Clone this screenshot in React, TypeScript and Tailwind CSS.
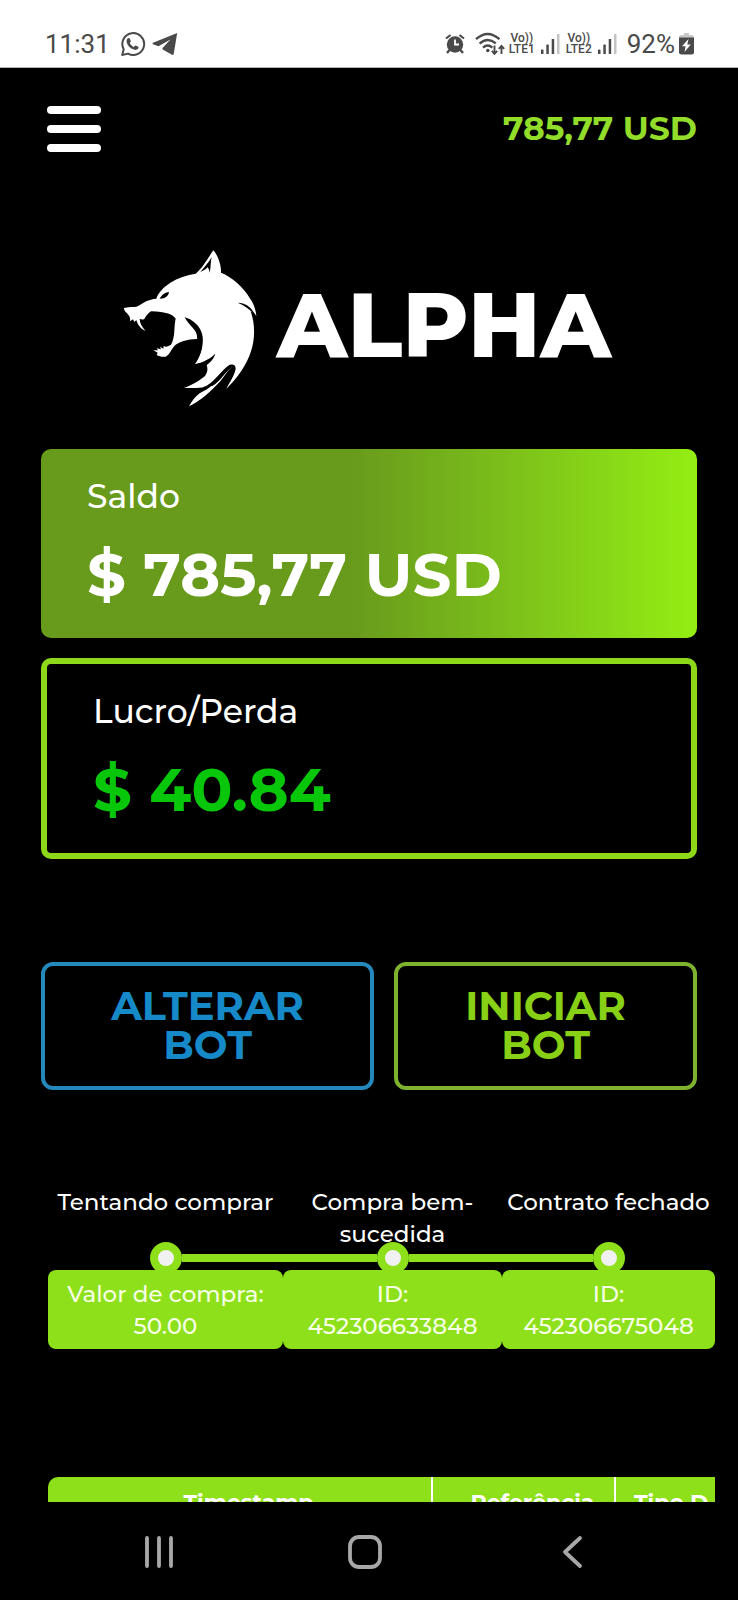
import type { ReactNode } from 'react'

const steps = [
  { title: 'Tentando comprar', label: 'Valor de compra:', value: '50.00' },
  { title: 'Compra bem-sucedida', label: 'ID:', value: '452306633848' },
  { title: 'Contrato fechado', label: 'ID:', value: '452306675048' },
]

function WhatsappIcon() {
  return (
    <svg viewBox="0 0 26 26" className="size-[26px]" fill="none">
      <path d="M2.2 24l1.5-5.7A10.9 10.9 0 1 1 8 22.6z" stroke="#4a4a4a" strokeWidth="2" strokeLinejoin="round" />
      <path
        d="M7.3 7.8c1-1.2 2-1 2.5 0l1 2.3c.2.6-.8 1.4-1 1.9.8 1.7 2.2 3 4 3.9.6-.2 1.2-1.5 1.9-1.3l2.5 1.2c.7.5.3 1.7-.4 2.3-1.5 1.2-3.5.9-5.3 0-2.2-1.1-4-2.8-5.1-4.9-.8-1.6-1.3-3.9-.1-5.4z"
        fill="#4a4a4a"
      />
    </svg>
  )
}

function TelegramIcon() {
  return (
    <svg viewBox="0 0 26 24" className="h-6 w-[26px]">
      <path d="M25.2 1L1 10.7c-.7.4-.6 1.3 0 1.6l5.5 1.9L18.5 7.5 10.5 16l.1 1.5 9.5 5.3c.7.3 1.4 0 1.6-.8z" fill="#4a4a4a" />
    </svg>
  )
}

function AlarmIcon() {
  return (
    <svg viewBox="0 0 20 20" className="size-5" fill="none" stroke="#4a4a4a">
      <circle cx="10" cy="10.5" r="8.2" fill="#4a4a4a" stroke="none" />
      <path d="M1 4.5L5.5 1M19 4.5L14.5 1" strokeWidth="2.2" />
      <path d="M4.5 16L2 19M15.5 16l2.5 3" strokeWidth="2.4" />
      <path d="M10 5.5v5h4" stroke="#fff" strokeWidth="1.8" />
    </svg>
  )
}

function WifiIcon() {
  return (
    <svg viewBox="0 0 30 24" className="h-6 w-[30px]" fill="none" stroke="#4a4a4a">
      <path d="M1 7.2Q12.5-3.4 24.5 7.2M4.6 11.6q8-7 16.2-.2M8 15.6q4.6-4 9.4 0" strokeWidth="2.4" />
      <circle cx="12.8" cy="18.5" r="1.8" fill="#4a4a4a" stroke="none" />
      <path d="M19.5 13.5v8.2M16.8 18.8l2.7 3 2.7-3M26.5 22v-8.2M23.8 16.8l2.7-3 2.7 3" strokeWidth="1.9" />
    </svg>
  )
}

function SignalBars() {
  return (
    <svg viewBox="0 0 19 20" className="h-5 w-[19px]" fill="#4a4a4a">
      <rect x="0" y="15.5" width="2.5" height="4.5" rx=".5" />
      <rect x="5.3" y="10.5" width="2.5" height="9.5" rx=".5" />
      <rect x="10.7" y="5" width="2.5" height="15" rx=".5" />
      <rect x="16" y="0" width="2.5" height="20" rx=".5" fill="#c4c4c4" />
    </svg>
  )
}

function BatteryIcon() {
  return (
    <svg viewBox="0 0 15 22" className="h-[22px] w-[15px]">
      <path d="M5 0h5v2h2.5q2.5 0 2.5 2.5V6H0V4.5Q0 2 2.5 2H5z" fill="#c8c8c8" />
      <path d="M0 4.5h15V19q0 2.5-2.5 2.5h-10Q0 21.5 0 19z" fill="#4a4a4a" />
      <path d="M9.5 6L3 13.3h3.6L5.5 19l6.3-7.5H8.3z" fill="#fff" />
    </svg>
  )
}

function Volte({ line }: { line: string }) {
  return (
    <div className="flex flex-col items-center text-xs font-medium leading-[11px]">
      <span>Vo))</span>
      <span>{line}</span>
    </div>
  )
}

function StatusBar() {
  return (
    <div className="flex h-[68px] shrink-0 items-center justify-between border-b border-[#b5b5b5] bg-white pl-[45px] pr-11 pt-5 font-[Roboto,sans-serif] text-[#4a4a4a]">
      <div className="flex items-center gap-2.5">
        <span className="text-[26px] leading-7">11:31</span>
        <div className="flex items-center gap-1.5">
          <WhatsappIcon />
          <TelegramIcon />
        </div>
      </div>
      <div className="flex items-center">
        <AlarmIcon />
        <div className="ml-2.5 flex items-center gap-1">
          <WifiIcon />
          <Volte line="LTE1" />
        </div>
        <div className="ml-1.5 flex items-center gap-1.5">
          <SignalBars />
          <Volte line="LTE2" />
          <SignalBars />
        </div>
        <span className="ml-2.5 text-[26px] leading-7">92%</span>
        <div className="ml-1">
          <BatteryIcon />
        </div>
      </div>
    </div>
  )
}

function WolfLogo() {
  return (
    <svg viewBox="0 0 480 540" className="h-[180px] w-[160px] shrink-0" role="img" aria-label="Alpha">
      <path
        d="M38 205C50 200 68 203 80 199C98 187 112 178 136 176C140 160 156 143 178 128C200 114 228 105 254 101C275 84 290 55 307 31C319 44 331 72 330 98C362 110 398 142 416 174C428 190 434 208 436 228C430 219 424 216 419 214C433 252 432 300 420 334C408 374 378 416 346 446C352 424 366 404 368 378C350 388 340 412 322 430C300 454 266 484 234 499C243 484 252 470 266 460C284 450 296 444 306 432C280 446 248 444 219 444C246 434 268 420 282 408C292 394 290 382 286 372C276 368 264 370 251 373C266 352 276 326 272 300C266 296 262 296 257 297C230 297 202 306 190 318C180 330 176 344 164 350C154 351 144 350 137 345L140 338L127 331L141 331L137 325L150 328L147 320L157 326L158 318C166 323 172 318 180 314C194 290 188 258 194 236C186 224 166 215 120 214C110 220 104 230 100 237C94 240 90 238 86 236C86 250 94 262 104 273C88 266 80 254 76 240L70 246L66 238L57 244C60 230 50 222 42 214Z"
        fill="#fff"
      />
      <g fill="#000">
        <path d="M146 176C154 162 164 157 174 156C172 168 164 176 146 176Z" />
        <path d="M268 96C282 80 294 66 302 51C298 66 300 80 296 99C295 90 293 86 290 82C284 88 276 93 268 96Z" />
        <path d="M380 188C402 188 420 200 434 226C418 210 400 196 380 188Z" />
        <path d="M221 232C244 238 270 258 275 290C278 320 268 348 251 373L240 374C254 350 266 322 258 292C260 270 234 258 221 232Z" />
        <path d="M251 373C280 366 300 354 313 341C308 358 298 366 286 376L251 377Z" />
        <path d="M276 442C310 430 328 392 356 374Q374 370 374 386C370 408 356 426 346 446C344 424 358 404 364 382C342 394 330 424 304 438Z" />
      </g>
    </svg>
  )
}

function BalanceText({ label, amount, amountClass }: { label: string; amount: string; amountClass: string }) {
  return (
    <>
      <h2 className="text-[33px] font-medium leading-10 text-white">{label}</h2>
      <p className={`mt-4 text-[61px] font-bold leading-[84px] ${amountClass}`}>{amount}</p>
    </>
  )
}

function Balances() {
  return (
    <section className="mt-[29px] flex flex-col gap-5">
      <div className="rounded-[10px] bg-linear-to-r from-[#689a1c] from-47% to-[#94ee12] px-[46px] pb-[22px] pt-[27px]">
        <BalanceText label="Saldo" amount="$ 785,77 USD" amountClass="text-white" />
      </div>
      <div className="rounded-[10px] border-[6px] border-[#8ed81a] px-[46px] pb-[22px] pt-[27px]">
        <BalanceText label="Lucro/Perda" amount="$ 40.84" amountClass="text-[#08c60a]" />
      </div>
    </section>
  )
}

function Steps() {
  return (
    <section className="-mr-[18px] ml-[7px] mt-24 grid grid-cols-[235fr_219fr_213fr] text-center text-[23px] font-medium leading-8">
      {steps.map((step, i) => (
        <div key={step.title} className="flex flex-col">
          <h3 className="h-16 px-1">{step.title}</h3>
          <div className="mt-1 flex h-2 items-center">
            <span className={`h-2 flex-1 ${i > 0 ? 'bg-[#8ee01a]' : ''}`} />
            <span className="size-8 shrink-0 rounded-full border-8 border-[#8ee01a] bg-[#f1f1f1]" />
            <span className={`h-2 flex-1 ${i < steps.length - 1 ? 'bg-[#8ee01a]' : ''}`} />
          </div>
          <div className="mt-2 rounded-lg bg-[#8ee01a] pb-[7px] pt-2 text-[#f6ffe6]">
            <p>{step.label}</p>
            <p>{step.value}</p>
          </div>
        </div>
      ))}
    </section>
  )
}

function Transactions() {
  return (
    <section className="-mr-[18px] ml-[7px] mt-32 overflow-hidden rounded-tl-[10px]">
      <table className="w-full table-fixed border-collapse bg-[#8ee01a] text-[22px] font-bold leading-8">
        <thead>
          <tr>
            <th className="w-[384px] py-2.5 pl-[18px]">Timestamp</th>
            <th className="w-[183px] border-l-2 border-white py-2.5 pl-[18px]">Referência</th>
            <th className="whitespace-nowrap border-l-2 border-white py-2.5 pl-[18px] text-left">Tipo D</th>
          </tr>
        </thead>
      </table>
    </section>
  )
}

function NavButton({ label, children }: { label: string; children: ReactNode }) {
  return (
    <button type="button" aria-label={label} className="flex h-full items-center justify-center">
      <svg viewBox="0 0 34 34" className="size-[34px]" fill="none" stroke="#a8a8a8" strokeWidth="3.8" strokeLinecap="round" strokeLinejoin="round">
        {children}
      </svg>
    </button>
  )
}

function NavBar() {
  return (
    <nav className="grid h-[98px] shrink-0 grid-cols-3 bg-black pl-14 pr-16 pt-0.5">
      <NavButton label="Recentes">
        <path d="M5 3v28M17 3v28M29 3v28" />
      </NavButton>
      <NavButton label="Início">
        <rect x="2" y="2" width="30" height="30" rx="9" />
      </NavButton>
      <NavButton label="Voltar">
        <path d="M26 3L11 17l15 14" />
      </NavButton>
    </nav>
  )
}

export default function App() {
  return (
    <div className="flex h-screen flex-col bg-black font-[Montserrat,Inter,sans-serif] text-white">
      <StatusBar />
      <main className="flex-1 overflow-hidden px-[41px]">
        <header className="flex items-start justify-between pt-[38px]">
          <button type="button" aria-label="Menu" className="ml-1.5 flex w-[54px] flex-col gap-[11px]">
            <span className="h-2 rounded bg-white" />
            <span className="h-2 rounded bg-white" />
            <span className="h-2 rounded bg-white" />
          </button>
          <span className="text-[33px] font-bold leading-[44px] text-[#92dc2a]">785,77 USD</span>
        </header>
        <div className="mt-[88px] flex items-center justify-center gap-1.5 pr-4">
          <WolfLogo />
          <h1 className="pb-2.5 text-[90px] font-extrabold leading-none">ALPHA</h1>
        </div>
        <Balances />
        <div className="mt-[103px] grid grid-cols-[11fr_10fr] gap-5">
          <button type="button" className="rounded-xl border-4 border-[#2588bc] px-14 pb-[22px] pt-5 text-[40px] font-bold leading-[39px] text-[#168ac8]">
            ALTERAR BOT
          </button>
          <button type="button" className="rounded-xl border-4 border-[#7eb22e] px-14 pb-[22px] pt-5 text-[40px] font-bold leading-[39px] text-[#88d016]">
            INICIAR BOT
          </button>
        </div>
        <Steps />
        <Transactions />
      </main>
      <NavBar />
    </div>
  )
}
